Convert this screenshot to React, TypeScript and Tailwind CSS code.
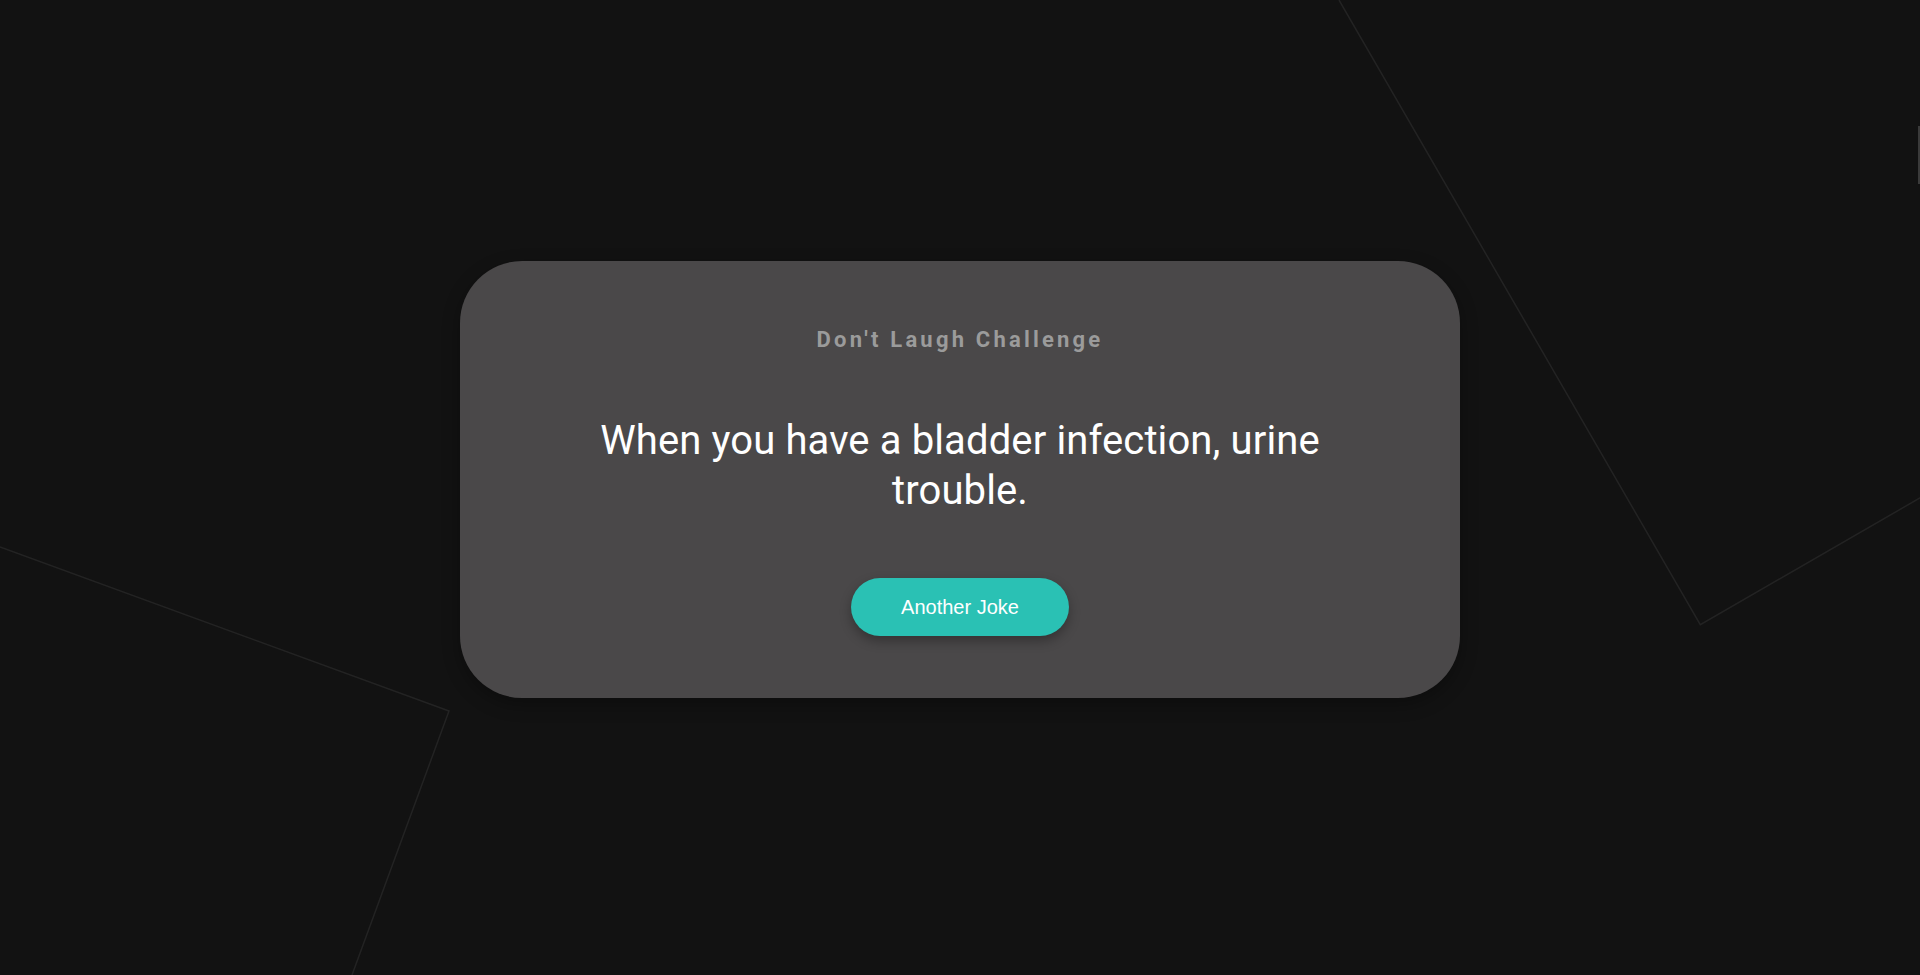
import React from "react";

export default function App() {
  return (
    <div className="relative w-full h-[975px] overflow-hidden bg-[#121212]">
      <svg className="absolute inset-0 pointer-events-none" width="1920" height="975" viewBox="0 0 1920 975">
        <polyline points="1339,0 1700.3,624.7 1925,495" fill="none" stroke="#232323" strokeWidth="1.5" />
        <polyline points="0,547 449,711 352,975" fill="none" stroke="#232323" strokeWidth="1.5" />
      </svg>
      <div className="absolute right-0 top-[126px] w-[2px] h-[58px] bg-[#3a3a3a]" />
      <div className="relative flex h-full items-center justify-center pb-[16px]">
        <div
          className="flex w-[1000px] flex-col items-center rounded-[62px] bg-[#4a4849] pt-[66px] pb-[62px] shadow-[0_6px_18px_rgba(0,0,0,0.3)]"
        >
          <h2
            className="text-[22px] leading-[26px] font-bold tracking-[3.2px] text-[#9b9b9b]"
            style={{ fontFamily: "Roboto, 'Liberation Sans', sans-serif" }}
          >
            Don't Laugh Challenge
          </h2>
          <p
            className="mt-[63px] max-w-[840px] text-center text-[40px] leading-[50px] tracking-[0.12px] text-white"
            style={{ fontFamily: "Roboto, 'Liberation Sans', sans-serif" }}
          >
            When you have a bladder infection, urine trouble.
          </p>
          <button
            className="mt-[62px] h-[58px] rounded-full bg-[#2ac1b4] px-[50px] text-[20px] text-white shadow-[0_5px_12px_rgba(0,0,0,0.3)]"
            style={{ fontFamily: "'Liberation Sans', Arial, sans-serif" }}
          >
            Another Joke
          </button>
        </div>
      </div>
    </div>
  );
}
